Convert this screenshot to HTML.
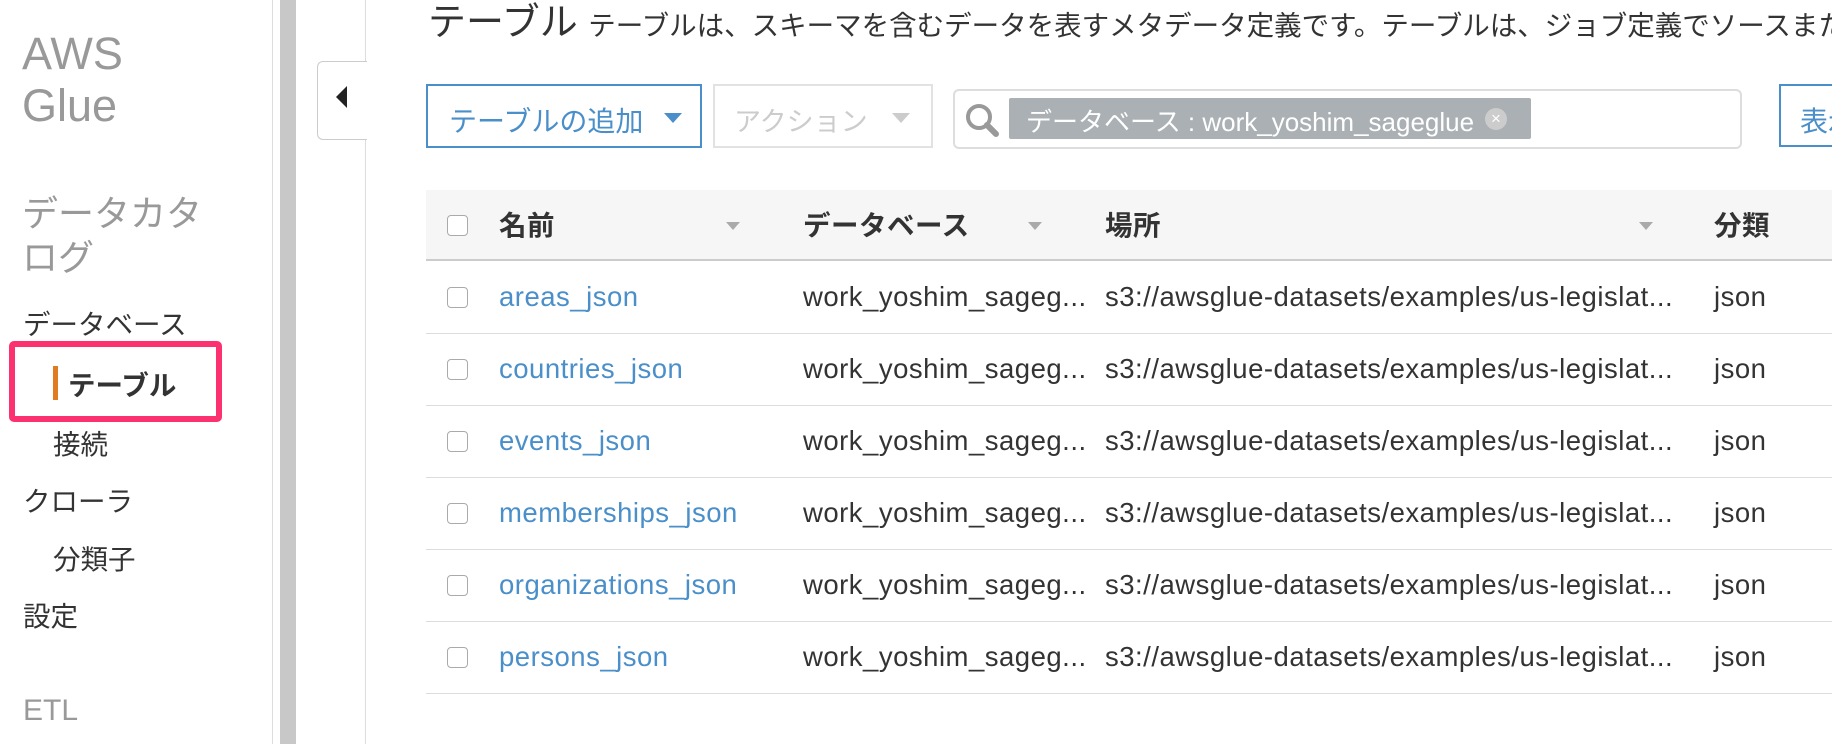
<!DOCTYPE html>
<html><head><meta charset="utf-8"><style>
body{margin:0;width:1832px;height:744px;overflow:hidden;background:#fff;font-family:"Liberation Sans","Noto Sans CJK JP",sans-serif;color:#333;position:relative}
.a{position:absolute;white-space:nowrap}
.side{color:#999}
.nav{font-size:27.5px;color:#333}
.row{position:absolute;left:426px;width:1406px;height:72px;border-bottom:1px solid #ddd}
.cb{position:absolute;left:21px;width:19px;height:19px;border:1px solid #aaa;border-radius:4px;background:#fff}
.c{position:absolute;font-size:27.5px;line-height:28px;letter-spacing:0.5px}
.lnk{color:#4a8fc9}
.arr{position:absolute;width:0;height:0;border-left:7px solid transparent;border-right:7px solid transparent;border-top:8px solid #aaa}
</style></head><body>
<div class="a side" style="left:22px;top:28px;font-size:45px;line-height:52px">AWS<br>Glue</div>
<div class="a side" style="left:22px;top:192px;font-size:36px;line-height:44px">データカタ<br>ログ</div>
<div class="a nav" style="left:23px;top:302px">データベース</div>
<div class="a" style="left:9px;top:341px;width:201px;height:69px;border:6px solid #fc3270;border-radius:5px"></div>
<div class="a" style="left:53px;top:366px;width:5px;height:34px;background:#e07b24"></div>
<div class="a nav" style="left:68px;top:363px;font-weight:bold">テーブル</div>
<div class="a nav" style="left:53px;top:422px">接続</div>
<div class="a nav" style="left:23px;top:479px">クローラ</div>
<div class="a nav" style="left:53px;top:537px">分類子</div>
<div class="a nav" style="left:23px;top:594px">設定</div>
<div class="a side" style="left:23px;top:694px;font-size:30px">ETL</div>
<div class="a" style="left:272px;top:0;width:1px;height:744px;background:#ddd"></div>
<div class="a" style="left:280px;top:0;width:16px;height:744px;background:#c8c8c8"></div>
<div class="a" style="left:365px;top:0;width:1px;height:744px;background:#ddd"></div>
<div class="a" style="left:317px;top:61px;width:49px;height:77px;border:1px solid #ccc;border-right:none;border-radius:6px 0 0 6px;background:#fff"></div>
<div class="a" style="left:336px;top:86px;width:0;height:0;border-top:11px solid transparent;border-bottom:11px solid transparent;border-right:11px solid #222"></div>
<div class="a" style="left:428px;top:-2px;font-size:38px;line-height:50px">テーブル <span style="font-size:27.5px">テーブルは、スキーマを含むデータを表すメタデータ定義です。テーブルは、ジョブ定義でソースまたはターゲットとして使用されます。</span></div>
<div class="a" style="left:426px;top:84px;width:276px;height:64px;border:2px solid #4a8fc9;box-sizing:border-box"></div>
<div class="a lnk" style="left:449px;top:100px;font-size:28px">テーブルの追加</div>
<div class="a" style="left:664px;top:113px;border-left:9px solid transparent;border-right:9px solid transparent;border-top:10px solid #4a8fc9"></div>
<div class="a" style="left:713px;top:84px;width:220px;height:64px;border:2px solid #e2e2e2;box-sizing:border-box"></div>
<div class="a" style="left:734px;top:100px;font-size:27px;color:#ccc">アクション</div>
<div class="a" style="left:892px;top:113px;border-left:9px solid transparent;border-right:9px solid transparent;border-top:10px solid #ccc"></div>
<div class="a" style="left:953px;top:89px;width:789px;height:60px;border:2px solid #ddd;border-radius:6px;box-sizing:border-box"></div>
<svg class="a" style="left:963px;top:101px" width="40" height="40" viewBox="0 0 40 40"><circle cx="16" cy="16" r="11" fill="none" stroke="#999" stroke-width="4"/><line x1="24" y1="24" x2="33" y2="33" stroke="#999" stroke-width="6" stroke-linecap="round"/></svg>
<div class="a" style="left:1009px;top:98px;width:522px;height:41px;background:#aab0b3;border-radius:2px"></div>
<div class="a" style="left:1026px;top:102px;font-size:26px;color:#fff">データベース : work_yoshim_sageglue</div>
<div class="a" style="left:1485px;top:108px;width:22px;height:22px;border-radius:50%;background:#ccc;color:#fff;font-size:17px;line-height:22px;text-align:center">×</div>
<div class="a" style="left:1779px;top:84px;width:80px;height:63px;border:2px solid #4a8fc9;box-sizing:border-box"></div>
<div class="a lnk" style="left:1800px;top:100px;font-size:28px">表示</div>
<div class="a" style="left:426px;top:190px;width:1406px;height:69px;background:#f6f6f6;border-bottom:2px solid #ccc"></div>
<div class="row" style="top:190px;height:69px;border:none">
<div class="cb" style="top:25px"></div>
<div class="c" style="left:73px;top:22px;font-weight:bold">名前</div><div class="arr" style="left:300px;top:32px"></div>
<div class="c" style="left:377px;top:22px;font-weight:bold">データベース</div><div class="arr" style="left:602px;top:32px"></div>
<div class="c" style="left:679px;top:22px;font-weight:bold">場所</div><div class="arr" style="left:1213px;top:32px"></div>
<div class="c" style="left:1288px;top:22px;font-weight:bold">分類</div>
</div>
<div class="row" style="top:261px"><div class="cb" style="top:26px"></div><div class="c lnk" style="left:73px;top:22px">areas_json</div><div class="c" style="left:377px;top:22px">work_yoshim_sageg...</div><div class="c" style="left:679px;top:22px">s3://awsglue-datasets/examples/us-legislat...</div><div class="c" style="left:1288px;top:22px">json</div></div>
<div class="row" style="top:333px"><div class="cb" style="top:26px"></div><div class="c lnk" style="left:73px;top:22px">countries_json</div><div class="c" style="left:377px;top:22px">work_yoshim_sageg...</div><div class="c" style="left:679px;top:22px">s3://awsglue-datasets/examples/us-legislat...</div><div class="c" style="left:1288px;top:22px">json</div></div>
<div class="row" style="top:405px"><div class="cb" style="top:26px"></div><div class="c lnk" style="left:73px;top:22px">events_json</div><div class="c" style="left:377px;top:22px">work_yoshim_sageg...</div><div class="c" style="left:679px;top:22px">s3://awsglue-datasets/examples/us-legislat...</div><div class="c" style="left:1288px;top:22px">json</div></div>
<div class="row" style="top:477px"><div class="cb" style="top:26px"></div><div class="c lnk" style="left:73px;top:22px">memberships_json</div><div class="c" style="left:377px;top:22px">work_yoshim_sageg...</div><div class="c" style="left:679px;top:22px">s3://awsglue-datasets/examples/us-legislat...</div><div class="c" style="left:1288px;top:22px">json</div></div>
<div class="row" style="top:549px"><div class="cb" style="top:26px"></div><div class="c lnk" style="left:73px;top:22px">organizations_json</div><div class="c" style="left:377px;top:22px">work_yoshim_sageg...</div><div class="c" style="left:679px;top:22px">s3://awsglue-datasets/examples/us-legislat...</div><div class="c" style="left:1288px;top:22px">json</div></div>
<div class="row" style="top:621px"><div class="cb" style="top:26px"></div><div class="c lnk" style="left:73px;top:22px">persons_json</div><div class="c" style="left:377px;top:22px">work_yoshim_sageg...</div><div class="c" style="left:679px;top:22px">s3://awsglue-datasets/examples/us-legislat...</div><div class="c" style="left:1288px;top:22px">json</div></div>
</body></html>
